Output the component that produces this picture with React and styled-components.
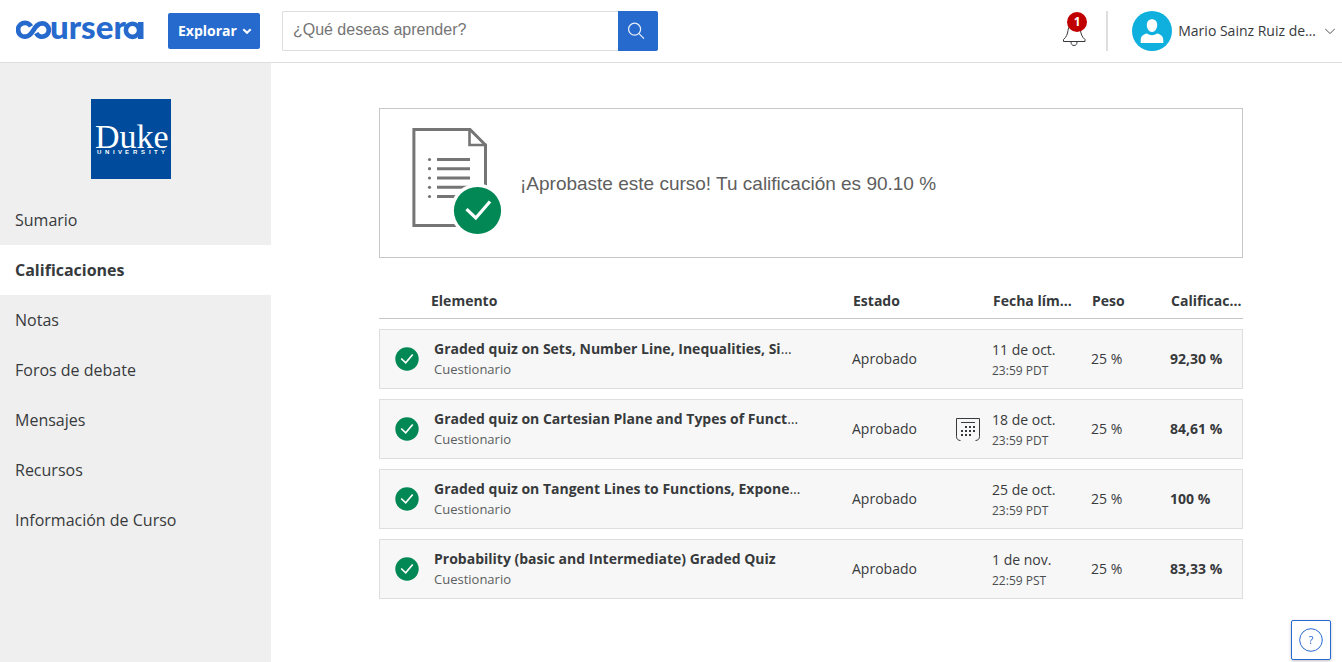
import React from "react";
import styled, { createGlobalStyle } from "styled-components";

const BLUE = "#276ace";
const GREEN = "#028855";
const INK = "#373a3c";

const GlobalStyle = createGlobalStyle`
  *, *::before, *::after { box-sizing: border-box; }
  body {
    margin: 0;
    background: #fff;
    color: ${INK};
    font-family: "Open Sans", "Noto Sans", sans-serif;
    font-size: 14px;
    line-height: 20px;
  }
  button, input { font: inherit; }
  a { color: inherit; text-decoration: none; }
`;

const Page = styled.div`
  display: flex;
  flex-direction: column;
  min-height: 100vh;
`;

const Header = styled.header`
  display: flex;
  align-items: center;
  height: 63px;
  padding: 0 7px 0 16px;
  border-bottom: 1px solid #dedede;
`;

const LogoLink = styled.a`
  display: flex;
  margin-right: 24px;
`;

const ExploreButton = styled.button`
  display: flex;
  align-items: center;
  gap: 5px;
  height: 36px;
  padding: 0 8px 0 10px;
  border: 0;
  border-radius: 2px;
  background: ${BLUE};
  color: #fff;
  font-weight: 700;
`;

const SearchForm = styled.form`
  display: flex;
  width: 376px;
  height: 40px;
  margin-left: 22px;
`;

const SearchInput = styled.input`
  flex: 1;
  min-width: 0;
  padding: 0 10px 2px;
  border: 1px solid #dedede;
  border-right: 0;
  border-radius: 2px 0 0 2px;
  outline: 0;
  font-family: "Liberation Sans", Arial, sans-serif;
  font-size: 16px;
  &::placeholder { color: #757575; opacity: 1; }
`;

const SearchButton = styled.button`
  display: flex;
  align-items: center;
  justify-content: center;
  width: 40px;
  padding: 0 4px 0 0;
  border: 0;
  border-radius: 0 2px 2px 0;
  background: ${BLUE};
`;

const Account = styled.div`
  display: flex;
  align-items: center;
  margin-left: auto;
`;

const BellButton = styled.button`
  position: relative;
  display: flex;
  padding: 6px 0 0;
  border: 0;
  background: none;
`;

const Badge = styled.span`
  position: absolute;
  top: -4px;
  right: 0;
  width: 20px;
  height: 20px;
  border-radius: 50%;
  background: #c00000;
  color: #fff;
  font-size: 12px;
  font-weight: 700;
  text-align: center;
`;

const Divider = styled.div`
  width: 2px;
  height: 40px;
  margin: 0 24px 0 19px;
  background: #dedede;
`;

const UserButton = styled.button`
  display: flex;
  align-items: center;
  padding: 0;
  border: 0;
  background: none;
  color: ${INK};
`;

const UserName = styled.span`
  margin: 0 9px 0 6px;
`;

const Body = styled.div`
  display: flex;
  flex: 1;
`;

const Sidebar = styled.aside`
  flex: none;
  width: 271px;
  padding-top: 36px;
  background: #efefef;
`;

const University = styled.a`
  display: block;
  width: 80px;
  height: 80px;
  margin: 0 0 16px 91px;
`;

const NavLink = styled.a`
  display: block;
  padding: 0 15px;
  background: ${(p) => (p.$active ? "#fff" : "transparent")};
  font-size: 16px;
  font-weight: ${(p) => (p.$active ? 700 : 400)};
  line-height: 50px;
`;

const Main = styled.main`
  flex: 1;
  min-width: 0;
  padding: 45px 99px 53px 108px;
`;

const ResultCard = styled.section`
  display: flex;
  align-items: center;
  height: 150px;
  padding: 0 32px;
  border: 1px solid #c7c7c7;
`;

const ResultText = styled.h1`
  margin: 0 0 0 18px;
  padding-top: 2px;
  color: #5e5e5e;
  font-family: "Liberation Sans", Arial, sans-serif;
  font-size: 19px;
  font-weight: 400;
  line-height: 24px;
`;

const Grades = styled.table`
  width: 100%;
  margin-top: 16px;
  border-spacing: 0 10px;
  table-layout: fixed;
`;

const Column = styled.col`
  width: ${(p) => p.$width};
`;

const HeadCell = styled.th`
  height: 35px;
  padding: 0 0 0 ${(p) => (p.$first ? "52px" : "1px")};
  border-bottom: 1px solid #c7c7c7;
  font-weight: 700;
  text-align: left;
  white-space: nowrap;
`;

const Cell = styled.td`
  height: 60px;
  padding: 0;
  border: solid #dedede;
  border-width: 1px 0;
  background: #f7f7f7;
  font-weight: ${(p) => (p.$strong ? 700 : 400)};
  white-space: nowrap;
  &:first-child { border-left-width: 1px; padding-left: 15px; }
  &:last-child { border-right-width: 1px; }
  svg { display: block; }
`;

const DateCell = styled(Cell)`
  padding-top: 3px;
`;

const ItemLink = styled.a`
  display: block;
  font-weight: 700;
`;

const Ellipsis = styled.span`
  font-weight: 400;
`;

const ItemType = styled.div`
  color: #5b5e60;
  font-size: 13px;
`;

const Time = styled.div`
  margin-top: 1px;
  color: #4b4e50;
  font-size: 12px;
`;

const HelpButton = styled.button`
  position: fixed;
  right: 11px;
  bottom: 2px;
  display: flex;
  align-items: center;
  justify-content: center;
  width: 40px;
  height: 40px;
  padding: 0;
  border: 1px solid ${BLUE};
  border-radius: 2px;
  background: #fff;
  box-shadow: 0 1px 3px rgba(0, 0, 0, 0.25);
`;

const CourseraLogo = () => (
  <svg width="128" height="44" viewBox="0 -11 128 44" role="img" aria-label="Coursera">
    <path
      d="M15 6.400A6.900 6.900 0 1 0 9.200 16.700C13.500 16.700 15.600 13.300 17.600 10C19.600 6.600 21.600 3.300 26.200 3.300A6.700 6.700 0 1 1 20.200 13.200"
      fill="none"
      stroke={BLUE}
      strokeWidth="4.800"
    />
    <text x="34" y="19" fill={BLUE} fontFamily="Lato, sans-serif" fontWeight="900" fontSize="33">urser</text>
    <circle cx="116.500" cy="10.300" r="6.600" fill="none" stroke={BLUE} strokeWidth="4.600" />
    <rect x="122" y="2" width="5.500" height="17" fill={BLUE} />
  </svg>
);

const DukeLogo = () => (
  <svg width="80" height="80" viewBox="0 0 80 80" role="img" aria-label="Duke University">
    <rect width="80" height="80" fill="#004b9b" />
    <text fill="#fff">
      <tspan x="4" y="49" fontFamily="Liberation Serif, serif" fontSize="34">Duke</tspan>
      <tspan x="6 14 22 27 34 42 50 58 63 70" y="55" fontFamily="Liberation Sans, sans-serif" fontSize="6" fontWeight="700">UNIVERSITY</tspan>
    </text>
  </svg>
);

const SmallChevron = () => (
  <svg width="10" height="8" viewBox="0 0 10 8" fill="none" stroke="#fff" strokeWidth="2">
    <path d="M1.3 2.2 5 5.8 8.7 2.2" />
  </svg>
);

const ThinChevron = () => (
  <svg width="10" height="8" viewBox="0 0 10 8" fill="none" stroke="#525252">
    <path d="M0 1.6 5 6.6 10 1.6" />
  </svg>
);

const SearchIcon = () => (
  <svg width="18" height="18" viewBox="0 0 18 18" fill="none" stroke="#e8f0fb" strokeWidth="1.2">
    <circle cx="7.6" cy="7.2" r="6" />
    <path d="m12 11.6 5 5" />
  </svg>
);

const BellIcon = () => (
  <svg width="25" height="24" viewBox="0 0 25 24" fill="none" stroke="#373a3c">
    <path d="M1.5 19.500v-2c3-2.500 4-5.500 4.500-9C6.600 4.500 8 1.500 12 1.500s6 3 6.500 7c.5 3.500 1.500 6.500 4.500 9v2z" />
    <path d="M9 20c0 2 1 3.500 3 3.500s3-1.500 3-3.500" />
  </svg>
);

const Avatar = () => (
  <svg width="40" height="40" viewBox="0 0 40 40">
    <circle cx="20" cy="20" r="20" fill="#10b0de" />
    <path d="M20 8.300c-3.300 0-5.200 2.400-5.200 5.700 0 3.500 2.200 7 5.200 7s5.200-3.500 5.200-7c0-3.300-1.900-5.700-5.200-5.700z" fill="#fff" />
    <path d="M8.700 32v-2.500c0-4.300 2.400-6.200 6.500-7 1.300 1.100 2.900 1.700 4.800 1.700s3.500-.6 4.800-1.700c4.100.8 6.500 2.700 6.500 7V32z" fill="#fff" />
  </svg>
);

const ReportIcon = () => (
  <svg width="90" height="114" viewBox="0 0 90 114" fill="none" stroke="#757575" strokeWidth="3">
    <path d="M1.900 99.500V3.500H58L73.500 19V99.500z" />
    <path d="M57.500 3.500V19H75" strokeWidth="2.600" />
    <path d="M25 33.500h33M25 42.700h33M25 52h33M25 61.300h33M25 70.500h33" />
    <g fill="#757575" stroke="none">
      {[33.5, 42.7, 52, 61.3, 70.5].map((y) => (
        <circle key={y} cx="17.500" cy={y} r="1.600" />
      ))}
    </g>
    <circle cx="65.500" cy="84.500" r="27" fill="#fff" stroke="none" />
    <circle cx="65.500" cy="84.500" r="23.600" fill={GREEN} stroke="none" />
    <path d="m54.500 83.200 9.300 8.800L78 75.500" stroke="#fff" strokeWidth="3.200" />
  </svg>
);

const PassedIcon = () => (
  <svg width="24" height="24" viewBox="0 0 24 24" role="img" aria-label="Aprobado">
    <circle cx="12" cy="12" r="11.700" fill={GREEN} />
    <path d="m6.200 11.500 4.500 4.300 7-8.300" fill="none" stroke="#fff" strokeWidth="1.700" />
  </svg>
);

const CalendarIcon = () => (
  <svg width="24" height="24" viewBox="0 0 24 24" fill="none" stroke="#373a3c">
    <path d="M4.500 23.500C2 23.500.5 22 .5 19.500V1.500h23v18c0 2.500-1.500 4-4 4M5 5.500h14" />
    <path d="M9 10h10M5 14h14M5 18h10" strokeWidth="2" strokeDasharray="2 2" />
  </svg>
);

const HelpIcon = () => (
  <svg width="24" height="24" viewBox="0 0 24 24">
    <circle cx="12" cy="12" r="11.300" fill="none" stroke={BLUE} />
    <text x="12" y="16" textAnchor="middle" fill={BLUE} fontFamily="Open Sans, sans-serif" fontSize="11">?</text>
  </svg>
);

const NAV = ["Sumario", "Calificaciones", "Notas", "Foros de debate", "Mensajes", "Recursos", "Información de Curso"];

const ITEMS = [
  { name: "Graded quiz on Sets, Number Line, Inequalities, Si", cut: true, date: "11 de oct.", time: "23:59 PDT", grade: "92,30 %" },
  { name: "Graded quiz on Cartesian Plane and Types of Funct", cut: true, date: "18 de oct.", time: "23:59 PDT", grade: "84,61 %", calendar: true },
  { name: "Graded quiz on Tangent Lines to Functions, Expone", cut: true, date: "25 de oct.", time: "23:59 PDT", grade: "100 %" },
  { name: "Probability (basic and Intermediate) Graded Quiz", date: "1 de nov.", time: "22:59 PST", grade: "83,33 %" },
];

const GradeRow = ({ item }) => (
  <tr>
    <Cell><PassedIcon /></Cell>
    <Cell>
      <ItemLink href="#item">
        {item.name}
        {item.cut && <Ellipsis>…</Ellipsis>}
      </ItemLink>
      <ItemType>Cuestionario</ItemType>
    </Cell>
    <Cell>Aprobado</Cell>
    <Cell>{item.calendar && <CalendarIcon />}</Cell>
    <DateCell>
      {item.date}
      <Time>{item.time}</Time>
    </DateCell>
    <Cell>25 %</Cell>
    <Cell $strong>{item.grade}</Cell>
  </tr>
);

export default function App() {
  return (
    <Page>
      <GlobalStyle />
      <Header>
        <LogoLink href="#home"><CourseraLogo /></LogoLink>
        <ExploreButton type="button">Explorar<SmallChevron /></ExploreButton>
        <SearchForm role="search">
          <SearchInput type="text" aria-label="Buscar" placeholder="¿Qué deseas aprender?" />
          <SearchButton type="button" aria-label="Buscar"><SearchIcon /></SearchButton>
        </SearchForm>
        <Account>
          <BellButton type="button" aria-label="Notificaciones">
            <BellIcon />
            <Badge>1</Badge>
          </BellButton>
          <Divider />
          <UserButton type="button">
            <Avatar />
            <UserName>Mario Sainz Ruiz de…</UserName>
            <ThinChevron />
          </UserButton>
        </Account>
      </Header>
      <Body>
        <Sidebar>
          <University href="#duke"><DukeLogo /></University>
          <nav>
            {NAV.map((label) => (
              <NavLink key={label} href="#nav" $active={label === "Calificaciones"}>{label}</NavLink>
            ))}
          </nav>
        </Sidebar>
        <Main>
          <ResultCard>
            <ReportIcon />
            <ResultText>¡Aprobaste este curso! Tu calificación es 90.10 %</ResultText>
          </ResultCard>
          <Grades>
            <colgroup>
              <Column $width="55px" />
              <Column $width="auto" />
              <Column $width="104px" />
              <Column $width="36px" />
              <Column $width="99px" />
              <Column $width="79px" />
              <Column $width="73px" />
            </colgroup>
            <thead>
              <tr>
                <HeadCell colSpan={2} $first>Elemento</HeadCell>
                <HeadCell colSpan={2}>Estado</HeadCell>
                <HeadCell>Fecha lím…</HeadCell>
                <HeadCell>Peso</HeadCell>
                <HeadCell>Calificac…</HeadCell>
              </tr>
            </thead>
            <tbody>
              {ITEMS.map((item) => <GradeRow key={item.name} item={item} />)}
            </tbody>
          </Grades>
        </Main>
      </Body>
      <HelpButton type="button" aria-label="Ayuda"><HelpIcon /></HelpButton>
    </Page>
  );
}
